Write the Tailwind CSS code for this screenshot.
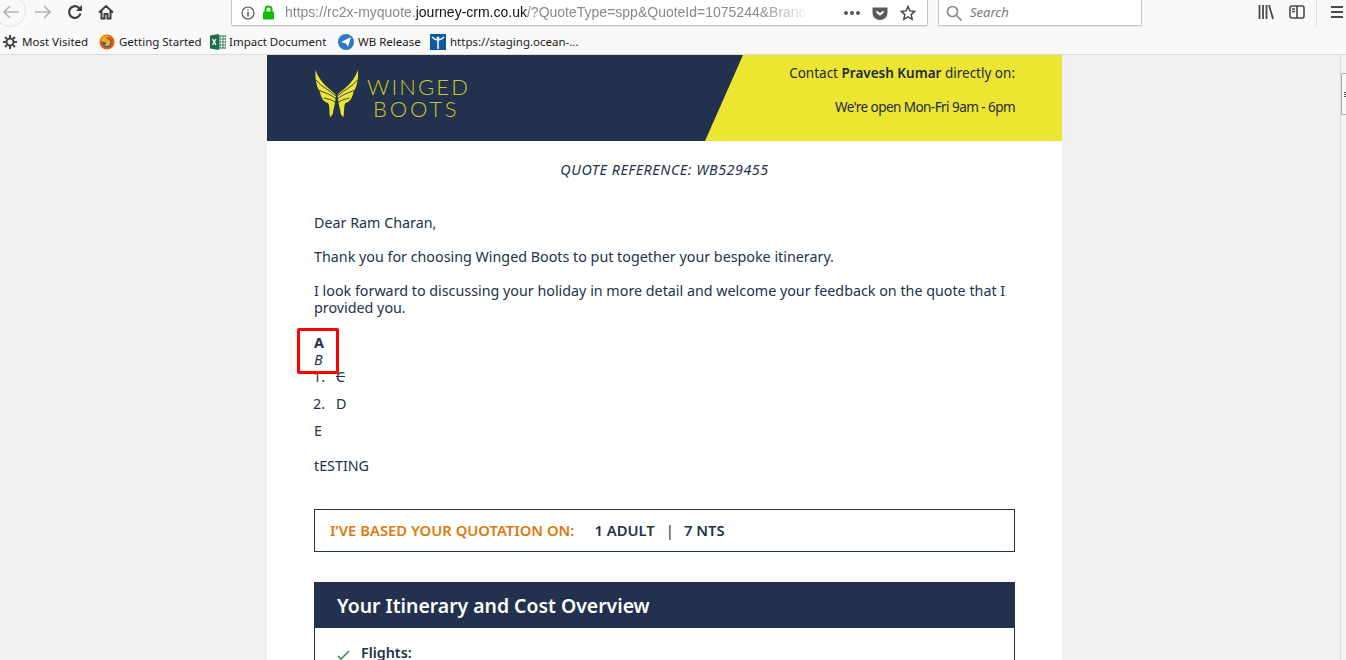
<!DOCTYPE html>
<html lang="en">
<head>
  <meta charset="UTF-8">
  <title>My Quote</title>
  <script src="https://cdn.jsdelivr.net/npm/@tailwindcss/browser@4"></script>
</head>
<body class="h-[660px] overflow-hidden bg-[#f1f1f1] font-['Noto_Sans',sans-serif]">
  <!-- browser toolbar -->
  <header class="h-[55px] bg-[#f9f9f9] border-b border-[#dcdcdc] font-['Liberation_Sans',sans-serif] overflow-hidden">
    <div class="h-[29px] flex items-start">
      <div class="relative w-[231px] h-[26px] flex items-center shrink-0 -mt-[1px]">
        <div class="absolute -left-[6px] -top-[4px] w-[32px] h-[32px] rounded-full border border-[#e4e4e4]"></div>
        <svg class="w-[18px] h-[18px] ml-[2px]" viewBox="0 0 18 18" fill="none" stroke="#b5b5b5" stroke-width="1.7"><path d="M17 9H2M8 3 2 9l6 6"/></svg>
        <svg class="w-[18px] h-[18px] ml-[14px]" viewBox="0 0 18 18" fill="none" stroke="#b5b5b5" stroke-width="1.7"><path d="M1 9h15M10 3l6 6-6 6"/></svg>
        <svg class="w-4 h-4 ml-[15px]" viewBox="0 0 16 16" fill="none" stroke="#3f3f3f" stroke-width="2.200"><path d="M13.500 9.500A5.800 5.800 0 1 1 11.500 3.500L14 6"/><path d="M15 1V7H9" fill="#3f3f3f" stroke="none"/></svg>
        <svg class="w-4 h-4 ml-[15px]" viewBox="0 0 16 16" fill="none" stroke="#3f3f3f" stroke-width="2"><path d="M1 8.500 8 2l7 6.500M3.500 7v7.500h3V10h3v4.500h3V7"/></svg>
      </div>
      <div class="w-[697px] h-[26px] bg-white border border-t-0 border-[#c4c4c4] rounded-b-[2px] flex items-center shadow-[0_1px_1px_#e4e4e4] shrink-0">
        <svg class="w-[14px] h-[14px] ml-[9px]" viewBox="0 0 14 14" fill="none" stroke="#555" stroke-width="1.200"><circle cx="7" cy="7" r="6"/><path d="M7 6v4.500M7 3.500v1.200" stroke-width="1.600"/></svg>
        <svg class="w-[13px] h-[15px] ml-[7px]" viewBox="0 0 13 15"><path d="M3.500 7V4.500a3 3 0 0 1 6 0V7" fill="none" stroke="#12bc00" stroke-width="2"/><rect x="1" y="6.500" width="11" height="8" rx="1" fill="#12bc00"/></svg>
        <div class="ml-[10px] w-[527px] overflow-hidden whitespace-nowrap text-[14px] text-[#8a8a8a] [mask-image:linear-gradient(to_right,#000_90%,transparent)]">https://rc2x-myquote.<span class="text-[#111]">journey-crm.co.uk</span>/?QuoteType=spp&amp;QuoteId=1075244&amp;Branc</div>
        <div class="ml-[32px] flex gap-[2px]"><i class="w-[4px] h-[4px] rounded-full bg-[#555]"></i><i class="w-[4px] h-[4px] rounded-full bg-[#555]"></i><i class="w-[4px] h-[4px] rounded-full bg-[#555]"></i></div>
        <svg class="w-4 h-4 ml-[12px]" viewBox="0 0 16 16"><path d="M1 2.500h14a.5.500 0 0 1 .5.500v5a7.500 7 0 0 1-15 0V3a.5.500 0 0 1 .5-.5z" fill="#595959"/><path d="m4.500 6.500 3.500 3 3.500-3" fill="none" stroke="#fff" stroke-width="2"/></svg>
        <svg class="w-4 h-4 ml-[12px]" viewBox="0 0 16 16" fill="none" stroke="#4a4a4a" stroke-width="1.500"><path d="m8 1.500 2 4.400 4.700.5-3.500 3.200 1 4.700L8 11.900l-4.200 2.400 1-4.700L1.300 6.400 6 5.900z"/></svg>
      </div>
      <div class="ml-[10px] w-[204px] h-[26px] bg-white border border-t-0 border-[#c4c4c4] rounded-b-[2px] flex items-center shadow-[0_1px_1px_#e4e4e4] shrink-0">
        <svg class="w-4 h-4 ml-[7px]" viewBox="0 0 16 16" fill="none" stroke="#8a8a8a" stroke-width="1.700"><circle cx="6.500" cy="6.500" r="5"/><path d="m10.500 10.500 5 5"/></svg>
        <span class="ml-[8px] text-[13px] italic text-[#777] font-['Noto_Sans',sans-serif]">Search</span>
      </div>
      <div class="flex items-center h-[26px] ml-[116px] -mt-[1px]">
        <svg class="w-4 h-4" viewBox="0 0 16 16" fill="none" stroke="#4a4a4a" stroke-width="1.800"><path d="M1.500 1v14M5 1v14M8.500 1v14M11 1l4 14"/></svg>
        <svg class="w-4 h-4 ml-[15px]" viewBox="0 0 16 16" fill="none" stroke="#4a4a4a" stroke-width="1.600"><rect x="1" y="2" width="14" height="12" rx="2"/><path d="M8 2v12M3 5h3M3 7.500h3"/></svg>
        <div class="w-px h-[29px] bg-[#dedede] ml-[11px]"></div>
        <svg class="w-[14px] h-4 ml-[13px]" viewBox="0 0 14 16" stroke="#4a4a4a" stroke-width="2"><path d="M1 3h12M1 8h12M1 13h12"/></svg>
      </div>
    </div>
    <nav class="h-[25px] flex items-center text-[11.500px] text-[#1a1a1a] whitespace-nowrap font-['Noto_Sans',sans-serif] pt-[1px]">
      <svg class="w-[14px] h-[14px] ml-[3px]" viewBox="0 0 14 14" fill="none" stroke="#444" stroke-width="2"><circle cx="7" cy="7" r="3.500"/><path d="M7 0v3M7 11v3M0 7h3M11 7h3M2 2l2 2M10 10l2 2M12 2l-2 2M4 10l-2 2"/></svg>
      <span class="ml-[5px] w-[65px]">Most Visited</span>
      <svg class="w-4 h-4 ml-[12px]" viewBox="0 0 16 16"><circle cx="8" cy="8" r="7.500" fill="#e66000"/><circle cx="8" cy="9" r="4.500" fill="#2b5fa8"/><path d="M2 6c1-4 6-6 10-3-3-1-5 0-5 2 3 0 5 2 4 5-1 2-4 3-6 1 2 0 3-2 1-3-2 0-3-1-4-2z" fill="#ffb10a"/></svg>
      <span class="ml-[4px] w-[79px]">Getting Started</span>
      <svg class="w-4 h-4 ml-[12px]" viewBox="0 0 16 16"><rect x="7" y="2" width="9" height="12" fill="#fff" stroke="#1d6f42"/><path d="M10 2v12M13 2v12M7 5h9M7 8h9M7 11h9" stroke="#1d6f42" stroke-width=".8"/><path d="M0 1.500 9 0v16L0 14.500z" fill="#1d6f42"/><path d="m2.500 5 3.500 6M6 5l-3.500 6" stroke="#fff" stroke-width="1.300"/></svg>
      <span class="ml-[3px] w-[97px]">Impact Document</span>
      <svg class="w-4 h-4 ml-[12px]" viewBox="0 0 16 16"><circle cx="8" cy="8" r="8" fill="#2f78c4"/><path d="m3 8 10-5-3 10-2-3.500z" fill="#fff"/></svg>
      <span class="ml-[4px] w-[60px]">WB Release</span>
      <svg class="w-4 h-4 ml-[12px]" viewBox="0 0 16 16"><rect width="16" height="16" fill="#10599e"/><circle cx="8" cy="4" r="1.500" fill="#fff"/><path d="M2 3c3 3 4 3 6 3s3 0 6-3M8 6v9" stroke="#fff" stroke-width="1.500" fill="none"/></svg>
      <span class="ml-[4px]">https://staging.ocean-...</span>
    </nav>
  </header>

  <div class="relative h-[605px] overflow-hidden">
    <main class="w-[795px] ml-[267px] h-full bg-white text-[#22324e] overflow-hidden">
      <section class="relative h-[86px] bg-[#22324e] overflow-hidden">
        <div class="absolute inset-y-0 right-0 w-[357px] bg-[#ece632] [clip-path:polygon(38px_0,100%_0,100%_100%,0_100%)]"></div>
        <div class="relative flex justify-between h-full pl-[48px] pr-[47px]">
          <div class="flex items-start pt-[15px]">
            <svg class="w-[44px] h-[48px]" viewBox="0 0 44 48">
              <g fill="#ece632">
                <path d="M.5 0C0 10 2 18 5 22c1 6 4 10 8 11 2 3 1 8 2 14 2-1 3-3 3-5l2-9 1-8C16 19 6 15 .5 0z"/>
                <path d="M43 0c.5 10-1.500 18-4.500 22-1 6-4 10-8 11-2 3-1 8-2 14-2-1-3-3-3-5l-2-9-1-8C27.500 19 37.500 15 43 0z"/>
              </g>
              <g fill="none" stroke="#22324e" stroke-width=".9">
                <path d="M1 10c5 7 14 10 20 16M4 20c5 3 12 4 17 9M9 28c4 1 9 2 12 5"/>
                <path d="M42.500 10c-5 7-14 10-20 16M39.500 20c-5 3-12 4-17 9M34.500 28c-4 1-9 2-12 5"/>
              </g>
            </svg>
            <div class="-mt-[3px] ml-[8px] font-['Lato',sans-serif] font-light text-[#c9c62a] text-[22px] leading-[22px] tracking-[2.100px] pt-[9px]">
              <div>WINGED</div>
              <div class="pl-[6px] tracking-[2.800px]">BOOTS</div>
            </div>
          </div>
          <div class="relative text-right text-[13.500px] leading-[18px] pt-[9px] text-[#1c2a44]">
            <p>Contact <b class="font-semibold">Pravesh Kumar</b> directly on:</p>
            <p class="mt-[16px] tracking-[-0.55px]">We're open Mon-Fri 9am - 6pm</p>
          </div>
        </div>
      </section>

      <section class="px-[47px] text-[14.300px] leading-[17px]">
        <p class="pt-[20px] text-center italic tracking-[0.55px]">QUOTE REFERENCE: WB529455</p>
        <p class="mt-[36px]">Dear Ram Charan,</p>
        <p class="mt-[17px]">Thank you for choosing Winged Boots to put together your bespoke itinerary.</p>
        <p class="mt-[17px]">I look forward to discussing your holiday in more detail and welcome your feedback on the quote that I provided you.</p>
        <p class="mt-[18px] font-bold">A</p>
        <p class="italic">B</p>
        <ol>
          <li class="flex h-[27px] items-start"><span class="-ml-[2px] w-[13px] mr-[11px] text-right">1.</span><span class="line-through">C</span></li>
          <li class="flex h-[27px] items-start"><span class="-ml-[2px] w-[13px] mr-[11px] text-right">2.</span><span>D</span></li>
        </ol>
        <p>E</p>
        <p class="mt-[18px]">tESTING</p>

        <div class="mt-[35px] h-[43px] border border-[#22324e] flex items-center pl-[15px] font-semibold text-[14.800px]">
          <span class="text-[#dd7a0c]">I’VE BASED YOUR QUOTATION ON:</span>
          <span class="ml-[20px]">1 ADULT</span>
          <span class="ml-[11px] font-normal text-[#1c2a44]">|</span>
          <span class="ml-[10px]">7 NTS</span>
        </div>

        <div class="mt-[30px] border-x border-[#22324e]">
          <h2 class="-mx-px h-[46px] bg-[#22324e] text-white text-[19.400px] font-semibold flex items-center pl-[23px] pt-[1px]">Your Itinerary and Cost Overview</h2>
          <div class="flex items-start pl-[22px] pt-[16px]">
            <svg class="w-[13px] h-[10px] mt-[6px]" viewBox="0 0 13 10" fill="none" stroke="#2e8b45" stroke-width="1.500"><path d="m1 6 3 3 8-8"/></svg>
            <b class="ml-[11px] font-semibold">Flights:</b>
          </div>
        </div>
      </section>
    </main>

    <!-- red highlight box -->
    <div class="absolute left-[297px] top-[273px] w-[42px] h-[46px] border-[3px] border-[#ff0000] rounded-[2px]"></div>

    <!-- scrollbar -->
    <div class="absolute top-0 right-0 bottom-0 w-[6px] border-l border-[#dcdcdc] bg-[#f4f4f4]">
      <div class="mt-[18px] h-[42px] border border-r-0 border-[#aaa] bg-[#f8f8f8] rounded-l-[2px] flex flex-col items-end justify-center gap-[1px]">
        <i class="w-[2px] h-[1px] bg-[#555]"></i><i class="w-[2px] h-[1px] bg-[#555]"></i><i class="w-[2px] h-[1px] bg-[#555]"></i>
      </div>
    </div>
  </div>
</body>
</html>
